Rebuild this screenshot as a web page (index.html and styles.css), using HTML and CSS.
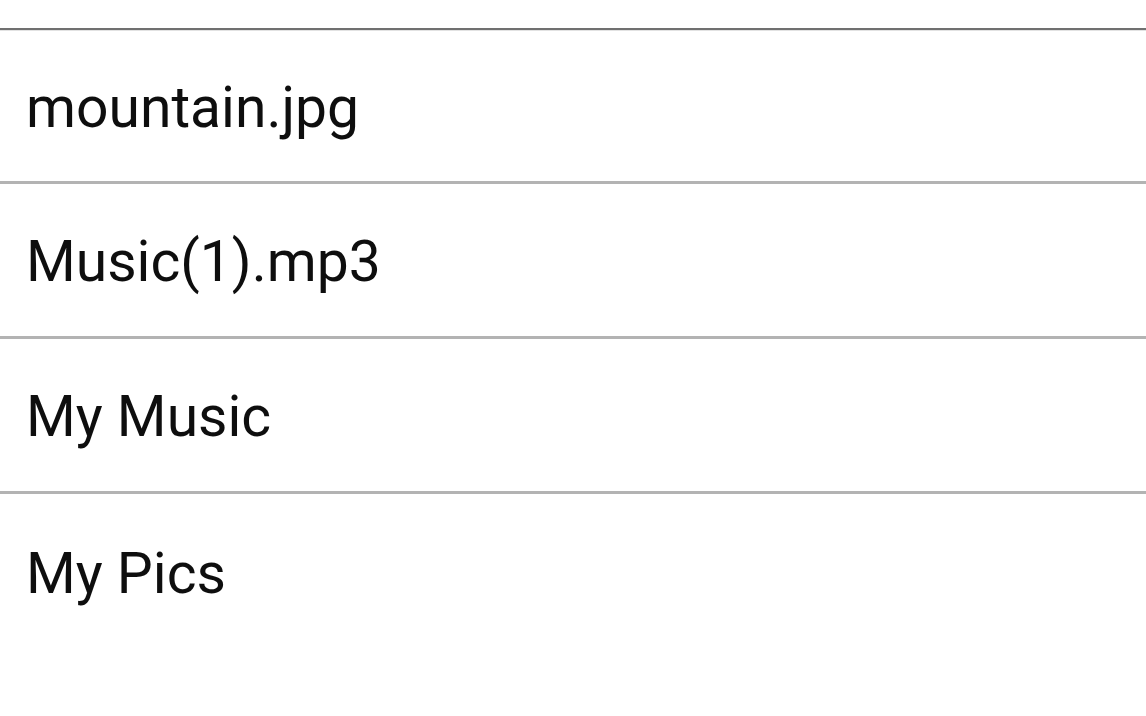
FILE: index.html
```html
<!DOCTYPE html>
<html lang="en">
<head>
<meta charset="utf-8">
<title>Files</title>
<link rel="stylesheet" href="styles.css">
</head>
<body>
<ul class="file-list">
  <li class="file-row">mountain.jpg</li>
  <li class="file-row">Music(1).mp3</li>
  <li class="file-row">My Music</li>
  <li class="file-row file-row--last">My Pics</li>
</ul>
</body>
</html>
```

FILE: styles.css
```css
html, body {
  margin: 0;
  padding: 0;
  background: #ffffff;
  height: 100%;
}

body {
  font-family: Roboto, "Noto Sans", sans-serif;
  color: #0e0e0e;
  overflow: hidden;
}

.file-list {
  list-style: none;
  margin: 28px 0 0 0;
  padding: 0;
  border-top: 2px solid #707070;
}

.file-row {
  display: flex;
  align-items: center;
  box-sizing: border-box;
  height: 155px;
  padding: 3px 0 0 26px;
  font-size: 57px;
  line-height: 1;
  border-bottom: 3px solid #b3b3b3;
}

.file-row:first-child {
  height: 154px;
  box-shadow: inset 0 1px 0 #e2e2e2;
}

.file-row--last {
  border-bottom: none;
}
```
